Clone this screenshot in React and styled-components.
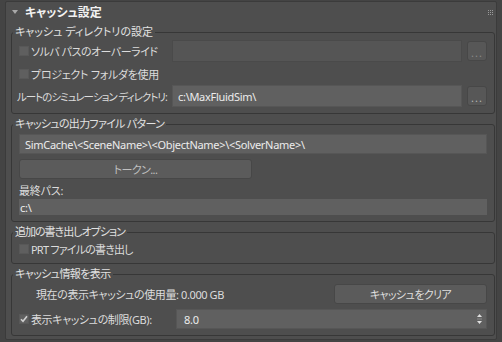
import React from "react";
import styled, { createGlobalStyle } from "styled-components";

const GlobalStyle = createGlobalStyle`
  html, body {
    margin: 0;
    padding: 0;
    background: #444444;
  }
  body {
    font-family: "Noto Sans", "Noto Sans CJK JP", sans-serif;
    font-size: 11px;
    letter-spacing: -0.3px;
    color: #dcdcdc;
    font-feature-settings: "palt";
  }
`;

const Screen = styled.div`
  width: 502px;
  height: 342px;
  box-sizing: border-box;
  padding: 1px 5px 2px 5px;
  background: #444444;
`;

const Rollout = styled.section`
  height: 100%;
  box-sizing: border-box;
  background: #4e4e4e;
  border: 1px solid #3b3b3b;
  border-radius: 2px;
  padding: 0 1px 2px 5px;
  display: flex;
  flex-direction: column;
  gap: 3px;
`;

const Header = styled.div`
  height: 20px;
  display: flex;
  align-items: center;
  .title {
    margin-left: 7px;
    font-weight: 700;
    color: #f2f2f2;
    font-size: 12px;
    letter-spacing: 0;
  }
  .grip {
    margin-left: auto;
    margin-right: 2px;
  }
`;

const Caret = styled.span`
  margin-left: 1px;
  width: 0;
  height: 0;
  border-left: 3px solid transparent;
  border-right: 3px solid transparent;
  border-top: 4px solid #a8a8a8;
`;

const Group = styled.fieldset`
  margin: 0;
  padding: 0 7px ${(p) => p.$bottom || 6}px;
  border: 1px solid #373737;
  border-radius: 3px;
  min-width: 0;
  display: flex;
  flex-direction: column;

  legend {
    margin-left: -6px;
    padding: 0 2px;
    font-size: 11px;
    line-height: 14px;
    letter-spacing: ${(p) => p.$legendSpacing ?? -0.6}px;
    color: #e2e2e2;
  }
`;

const PathRow = styled.div`
  display: grid;
  grid-template-columns: ${(p) => p.$label}px 1fr auto;
  align-items: center;
  height: ${(p) => p.$h || 22}px;
  margin-top: ${(p) => p.$top || 0}px;
`;

const Row = styled.div`
  display: flex;
  align-items: center;
  height: ${(p) => p.$h || 20}px;
  margin-top: ${(p) => p.$top || 0}px;
`;

const Label = styled.span`
  display: flex;
  align-items: center;
  white-space: nowrap;
  color: #dcdcdc;
  font-size: ${(p) => p.$size || 11}px;
  letter-spacing: ${(p) => p.$spacing ?? -0.6}px;
  padding-left: ${(p) => p.$indent || 0}px;
  margin-left: ${(p) => p.$shift || 0}px;
  width: ${(p) => (p.$w ? `${p.$w}px` : "auto")};
  flex: none;
`;

const Box = styled.span`
  flex: none;
  width: 10px;
  height: 10px;
  box-sizing: border-box;
  margin-right: 2px;
  background: #5f5f5f;
  border: 1px solid #585858;
  display: inline-flex;
  align-items: center;
  justify-content: center;
`;

const Field = styled.div`
  height: ${(p) => p.$h || 22}px;
  flex: ${(p) => (p.$grow ? 1 : "initial")};
  box-sizing: border-box;
  display: flex;
  align-items: center;
  padding-left: ${(p) => p.$pad || 5}px;
  padding-right: 6px;
  background: ${(p) => (p.$disabled ? "#555555" : "#606060")};
  border: ${(p) => (p.$flat ? "none" : `1px solid ${p.$disabled ? "#4a4a4a" : "#565656"}`)};
  color: #ececec;
  white-space: nowrap;
  overflow: hidden;
`;

const DotsButton = styled.div`
  width: 20px;
  height: 20px;
  margin-left: 5px;
  box-sizing: border-box;
  border-radius: 3px;
  background: #575757;
  border: 1px solid #474747;
  display: flex;
  align-items: flex-end;
  justify-content: center;
  color: ${(p) => (p.$dim ? "#8a8a8a" : "#b4b4b4")};
  font-size: 11px;
  line-height: 14px;
  letter-spacing: 1px;
`;

const Button = styled.div`
  width: ${(p) => p.$w}px;
  height: 20px;
  flex: none;
  box-sizing: border-box;
  border-radius: 3px;
  background: #5b5b5b;
  border: 1px solid #474747;
  display: flex;
  align-items: center;
  justify-content: center;
  letter-spacing: -0.6px;
  color: ${(p) => (p.$dim ? "#c0c0c0" : "#dedede")};
  margin-left: ${(p) => (p.$right ? "auto" : "0")};
`;

const Spinner = styled(Field)`
  flex: 1;
  justify-content: space-between;
  padding-left: 7px;
  padding-right: 4px;
`;

const Grip = () => (
  <svg className="grip" width="5" height="5" viewBox="0 0 5 5">
    {[0, 2, 4].map((y) =>
      [0, 2, 4].map((x) => (
        <rect key={`${x}-${y}`} x={x} y={y} width="1" height="1" fill="#9a9a9a" />
      ))
    )}
  </svg>
);

const CheckMark = () => (
  <svg width="8" height="8" viewBox="0 0 8 8">
    <path d="M1 4.2 L3 6.2 L7 1.2" stroke="#d0d0d0" strokeWidth="1.6" fill="none" />
  </svg>
);

const SpinArrows = () => (
  <svg width="5" height="10" viewBox="0 0 5 10">
    <path d="M2.5 0 L5 3 L0 3 Z" fill="#e0e0e0" />
    <rect x="0" y="4.5" width="5" height="1" fill="#8a8a8a" />
    <path d="M0 7 L5 7 L2.5 10 Z" fill="#e0e0e0" />
  </svg>
);

const Checkbox = ({ checked, w, spacing, children }) => (
  <Label $w={w} $spacing={spacing}>
    <Box>{checked && <CheckMark />}</Box>
    {children}
  </Label>
);

const App = () => {
  return (
    <>
      <GlobalStyle />
      <Screen>
        <Rollout>
          <Header>
            <Caret />
            <span className="title">キャッシュ設定</span>
            <Grip />
          </Header>

          <Group $legendSpacing={0}>
            <legend>キャッシュ ディレクトリの設定</legend>
            <PathRow $label={153} $top={1}>
              <Checkbox spacing={-0.5}>ソルバ パスのオーバーライド</Checkbox>
              <Field $disabled />
              <DotsButton $dim>...</DotsButton>
            </PathRow>
            <Row $h={23}>
              <Checkbox spacing={-0.3}>プロジェクト フォルダを使用</Checkbox>
            </Row>
            <PathRow $label={153}>
              <Label $shift={-2} $size={10.5} $spacing={-1}>
                ルートのシミュレーション ディレクトリ:
              </Label>
              <Field>c:\MaxFluidSim\</Field>
              <DotsButton>...</DotsButton>
            </PathRow>
          </Group>

          <Group $legendSpacing={-0.7}>
            <legend>キャッシュの出力ファイル パターン</legend>
            <Row $top={3}>
              <Field $h={20} $grow>
                SimCache\&lt;SceneName&gt;\&lt;ObjectName&gt;\&lt;SolverName&gt;\
              </Field>
            </Row>
            <Row $top={5}>
              <Button $w={233} $dim>
                トークン...
              </Button>
            </Row>
            <Row $h={18} $top={2}>
              <Label $spacing={-0.2}>最終パス:</Label>
            </Row>
            <Row $h={16}>
              <Field $h={16} $pad={1} $grow $flat>
                c:\
              </Field>
            </Row>
          </Group>

          <Group $bottom={4} $legendSpacing={-1}>
            <legend>追加の書き出しオプション</legend>
            <Row>
              <Checkbox spacing={-0.8}>PRT ファイルの書き出し</Checkbox>
            </Row>
          </Group>

          <Group $legendSpacing={-0.6}>
            <legend>キャッシュ情報を表示</legend>
            <Row $top={3}>
              <Label $indent={17} $spacing={-0.4}>
                現在の表示キャッシュの使用量: 0.000 GB
              </Label>
              <Button $w={153} $right>
                キャッシュをクリア
              </Button>
            </Row>
            <Row $top={5}>
              <Checkbox checked w={157} spacing={-0.4}>
                表示キャッシュの制限(GB):
              </Checkbox>
              <Spinner $h={20}>
                <span>8.0</span>
                <SpinArrows />
              </Spinner>
            </Row>
          </Group>
        </Rollout>
      </Screen>
    </>
  );
};

export default App;
